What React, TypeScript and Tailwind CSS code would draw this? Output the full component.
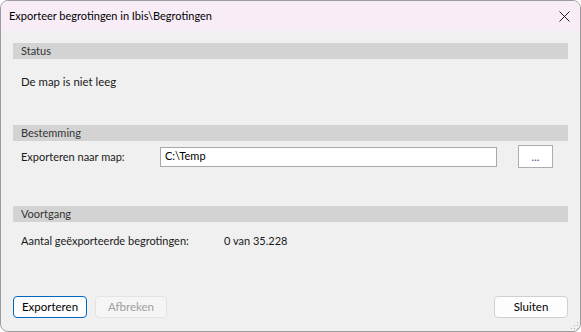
import React from 'react';

const font = { fontFamily: 'Lato, "Liberation Sans", sans-serif' };

function SectionBar({ title }: { title: string }) {
  return (
    <div className="h-[16px] bg-[#d3d3d3] pl-[8px] text-[11px] leading-[16px] text-[#333]">{title}</div>
  );
}

export default function App() {
  return (
    <div className="w-[581px] h-[332px] bg-white" style={font}>
      <div className="flex h-full flex-col overflow-hidden rounded-lg border border-[#9c9c9c] bg-[#f0f0f0]">
        {/* Title bar */}
        <div className="flex h-[30px] shrink-0 items-center justify-between bg-[#f8edf7] pl-[8px] pr-[10px]">
          <span className="text-[11px] text-black">Exporteer begrotingen in Ibis\Begrotingen</span>
          <svg width="11" height="11" viewBox="0 0 11 11" className="mt-[1px]">
            <path d="M0.5 0.5 L10.5 10.5 M10.5 0.5 L0.5 10.5" stroke="#222" strokeWidth="1" />
          </svg>
        </div>

        {/* Body */}
        <div className="relative flex flex-1 flex-col px-[12px] pt-[12px] text-[11px] text-[#1a1a1a]">
          <SectionBar title="Status" />
          <div className="mt-[15px] pl-[8px] leading-[16px] text-[11.4px]">De map is niet leeg</div>

          <div className="mt-[35px]">
            <SectionBar title="Bestemming" />
          </div>
          <div className="mt-[4px] flex h-[23px] items-center pl-[8px]">
            <span className="w-[139px] leading-[16px]">Exporteren naar map:</span>
            <div className="flex h-[20px] w-[337px] items-center border border-[#a8a8a8] bg-white pl-[4px] text-black">
              C:\Temp
            </div>
            <button className="ml-[21px] flex h-[23px] w-[35px] items-end justify-center border border-[#adadad] bg-white pb-[5px] text-[11px] leading-none text-[#5b3a7a]">
              ...
            </button>
          </div>

          <div className="mt-[38px]">
            <SectionBar title="Voortgang" />
          </div>
          <div className="mt-[11px] flex pl-[8px] leading-[16px]">
            <span className="w-[203px]">Aantal geëxporteerde begrotingen:</span>
            <span>0 van 35.228</span>
          </div>

          <div className="mt-auto mb-[13px] flex items-center text-[11.5px]">
            <button className="h-[22px] w-[74px] rounded-[4px] border border-[#0067c0] bg-[#fdfdfd] text-black">
              Exporteren
            </button>
            <button className="ml-[8px] h-[22px] w-[72px] rounded-[4px] border border-[#e3e3e3] bg-[#f5f5f5] text-[#a0a0a0]">
              Afbreken
            </button>
            <button className="ml-auto h-[22px] w-[74px] rounded-[4px] border border-[#d0d0d0] bg-[#fdfdfd] text-black">
              Sluiten
            </button>
          </div>

          {/* resize grip */}
          <svg width="8" height="8" viewBox="0 0 8 8" className="absolute bottom-[1px] right-[1px]">
            <rect x="6" y="0" width="1" height="1" fill="#b0b0b0" />
            <rect x="3" y="3" width="1" height="1" fill="#b0b0b0" />
            <rect x="6" y="3" width="1" height="1" fill="#b0b0b0" />
            <rect x="0" y="6" width="1" height="1" fill="#b0b0b0" />
            <rect x="3" y="6" width="1" height="1" fill="#b0b0b0" />
            <rect x="6" y="6" width="1" height="1" fill="#b0b0b0" />
          </svg>
        </div>
      </div>
    </div>
  );
}
